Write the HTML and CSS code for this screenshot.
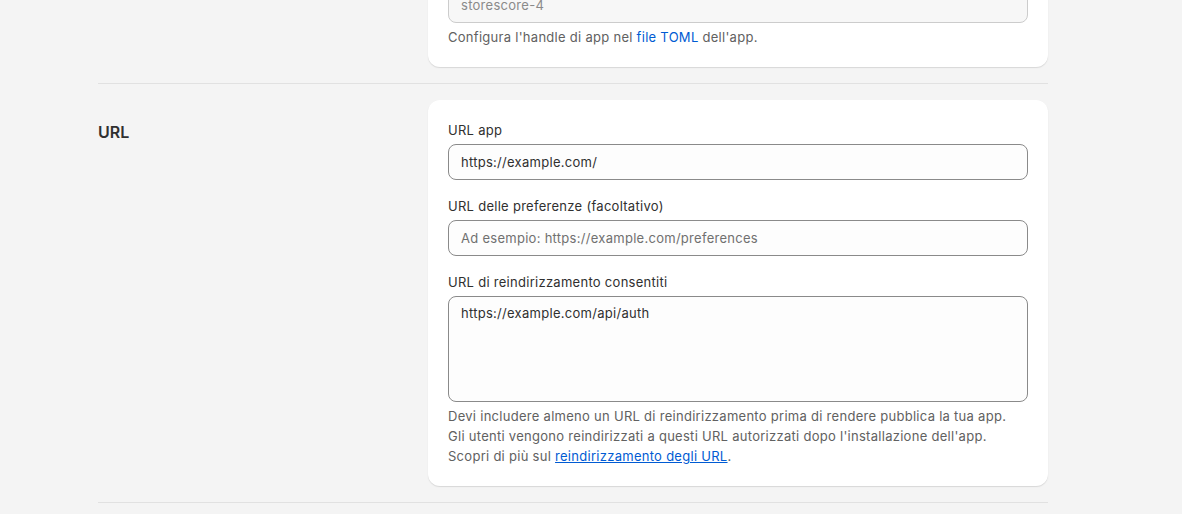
FILE: index.html
```html
<!DOCTYPE html>
<html lang="it">
<head>
<meta charset="utf-8">
<title>Configurazione</title>
<link rel="stylesheet" href="styles.css">
</head>
<body>
<main class="page">
  <section class="section section-first">
    <div class="section-info"></div>
    <div class="card">
      <div class="field">
        <label class="label">Handle app</label>
        <div class="input input-disabled">storescore-4</div>
        <p class="help">Configura l'handle di app nel <a class="link" href="#">file TOML</a> dell'app.</p>
      </div>
    </div>
  </section>
  <section class="section">
    <div class="section-info">
      <h2 class="heading">URL</h2>
    </div>
    <div class="card">
      <div class="field">
        <label class="label">URL app</label>
        <div class="input">https://example.com/</div>
      </div>
      <div class="field">
        <label class="label">URL delle preferenze (facoltativo)</label>
        <div class="input placeholder">Ad esempio: https://example.com/preferences</div>
      </div>
      <div class="field">
        <label class="label">URL di reindirizzamento consentiti</label>
        <div class="input textarea">https://example.com/api/auth</div>
        <p class="help">Devi includere almeno un URL di reindirizzamento prima di rendere pubblica la tua app.<br>Gli utenti vengono reindirizzati a questi URL autorizzati dopo l'installazione dell'app.<br>Scopri di più sul <a class="link link-underline" href="#">reindirizzamento degli URL</a>.</p>
      </div>
    </div>
  </section>
  <section class="section section-last"></section>
</main>
</body>
</html>
```

FILE: styles.css
```css
* { box-sizing: border-box; }
html, body { margin: 0; padding: 0; }
body {
  background: #f4f4f4;
  font-family: Inter, "Noto Sans", sans-serif;
  font-size: 13px;
  line-height: 20px;
  letter-spacing: 0.28px;
  color: #303030;
  overflow: hidden;
}
.page {
  width: 950px;
  margin-left: 98px;
  margin-top: -57px;
}
.section {
  display: grid;
  grid-template-columns: 330px 620px;
  padding: 16px 0;
  border-bottom: 1px solid #e1e1e1;
}
.section-first { padding-top: 0; }
.section-last { border-bottom: none; padding: 0; }
.heading {
  margin: 20px 0 0;
  font-size: 16px;
  line-height: 24px;
  font-weight: 600;
  letter-spacing: 0;
  color: #303030;
}
.card {
  background: #ffffff;
  border-radius: 12px;
  box-shadow: 0 1px 0 rgba(26,26,26,0.07), 0 1px 2px rgba(0,0,0,0.06);
  padding: 20px;
  display: flex;
  flex-direction: column;
  gap: 16px;
}
.field { display: flex; flex-direction: column; }
.label { display: block; margin-bottom: 4px; color: #303030; }
.input {
  height: 36px;
  border: 1px solid #8a8a8a;
  border-radius: 8px;
  padding: 7px 12px 7px 12px;
  background: #fdfdfd;
  color: #303030;
}
.input-disabled {
  background: #f7f7f7;
  border-color: #cccccc;
  color: #8a8a8a;
}
.placeholder { color: #707070; }
.textarea { height: 106px; padding-top: 6px; }
.help { margin: 4px 0 0; color: #616161; }
.link { color: #005bd3; text-decoration: none; }
.link-underline { text-decoration: underline; }
```
